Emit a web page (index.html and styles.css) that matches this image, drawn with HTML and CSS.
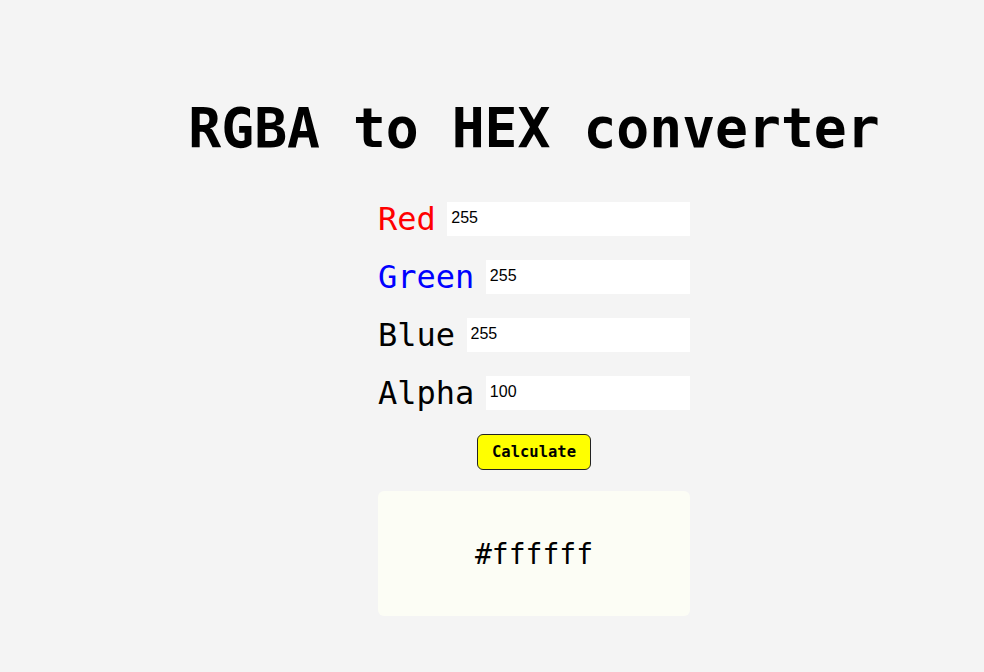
FILE: index.html
```html
<!DOCTYPE html>
<html lang="en">
<head>
<meta charset="utf-8">
<title>RGBA to HEX converter</title>
<link rel="stylesheet" href="styles.css">
</head>
<body>
<main class="page">
  <h1 class="title">RGBA to HEX converter</h1>
  <form class="form">
    <div class="row"><label class="label label-red" for="r">Red</label><input class="field" id="r" type="text" value="255"></div>
    <div class="row"><label class="label label-green" for="g">Green</label><input class="field" id="g" type="text" value="255"></div>
    <div class="row"><label class="label" for="b">Blue</label><input class="field" id="b" type="text" value="255"></div>
    <div class="row"><label class="label" for="a">Alpha</label><input class="field" id="a" type="text" value="100"></div>
    <div class="actions"><button class="btn" type="button">Calculate</button></div>
    <div class="result">#ffffff</div>
  </form>
</main>
</body>
</html>
```

FILE: styles.css
```css
html, body {
  margin: 0;
  padding: 0;
  background: #f4f4f4;
}

body {
  font-family: "DejaVu Sans Mono", monospace;
  color: #000;
}

.page {
  display: flex;
  flex-direction: column;
  align-items: center;
  padding-left: 84px;
  min-height: 672px;
  box-sizing: border-box;
}

.title {
  margin: 0;
  padding-top: 95.5px;
  font-size: 54.7px;
  font-weight: bold;
  line-height: 65px;
  white-space: nowrap;
}

.form {
  width: 312px;
  margin-top: 39.5px;
  display: flex;
  flex-direction: column;
}

.row {
  display: flex;
  align-items: center;
  height: 37px;
  margin-bottom: 21px;
}

.row:nth-child(4) {
  margin-bottom: 0;
}

.label {
  font-size: 32px;
  line-height: 37px;
  margin-right: 11.5px;
  white-space: nowrap;
  position: relative;
  top: 0.5px;
}

.label-red { color: #ff0000; }
.label-green { color: #0000ff; }

.field {
  flex: 1;
  min-width: 0;
  height: 34px;
  box-sizing: border-box;
  border: none;
  outline: none;
  background: #fff;
  padding: 0 3px 2px 4px;
  font-family: "Liberation Sans", Arial, sans-serif;
  font-size: 16px;
  color: #000;
}

.actions {
  display: flex;
  justify-content: center;
  margin-top: 22.5px;
}

.btn {
  width: 114px;
  height: 36px;
  box-sizing: border-box;
  background: #ffff00;
  border: 1px solid #222;
  border-radius: 6px;
  font-family: "DejaVu Sans Mono", monospace;
  font-weight: bold;
  font-size: 15.5px;
  color: #000;
  padding: 0;
}

.result {
  margin-top: 21px;
  height: 125px;
  background: #fcfdf5;
  border-radius: 6px;
  display: flex;
  align-items: center;
  justify-content: center;
  font-size: 28px;
  padding-top: 2px;
  box-sizing: border-box;
}
```
